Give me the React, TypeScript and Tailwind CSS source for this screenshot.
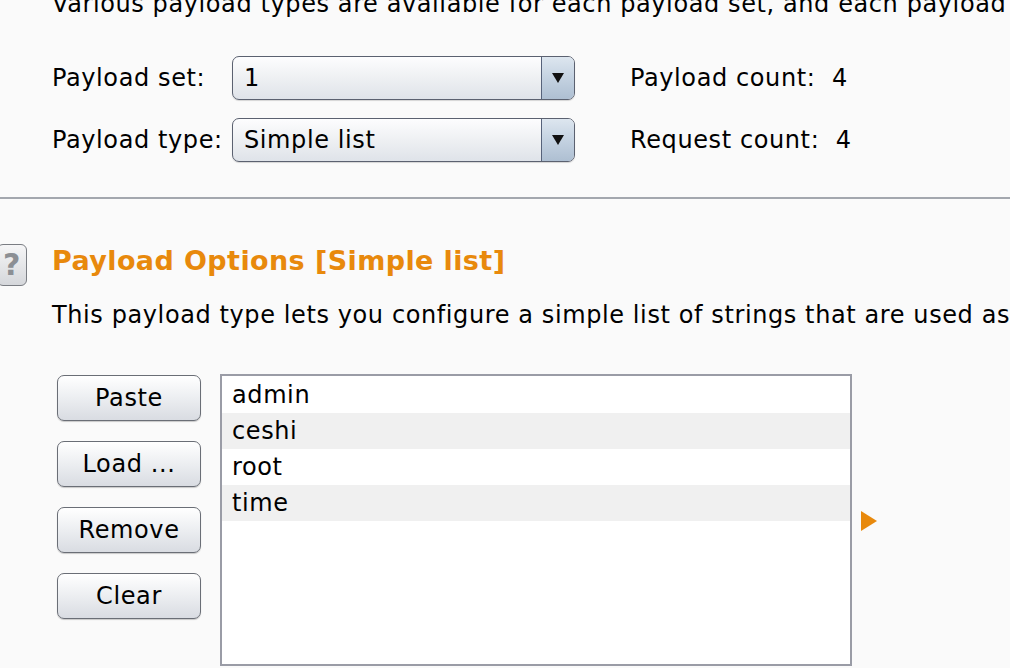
const Dropdown = ({ value }: { value: string }) => (
  <div className="flex h-[44px] w-[343px] overflow-hidden rounded-[7px] border border-[#5b6170] bg-gradient-to-b from-[#fdfdfe] via-[#eef0f3] to-[#dfe3e9] shadow-[0_1px_1px_rgba(0,0,0,0.15)]">
    <div className="flex flex-1 items-center pl-[11px] leading-none">{value}</div>
    <div className="flex w-[33px] items-center justify-center border-l border-[#56627a] bg-gradient-to-b from-[#dde6ef] via-[#c4d2e1] to-[#aebfd2]">
      <svg width="12" height="12" viewBox="0 0 12 12">
        <polygon points="0,1 12,1 6,11" fill="#111" />
      </svg>
    </div>
  </div>
);

const Button = ({ label }: { label: string }) => (
  <button className="flex h-[46px] w-[144px] items-center justify-center rounded-[7px] border border-[#6a6e76] bg-gradient-to-b from-[#ffffff] via-[#eceef1] to-[#d9dce2] leading-none text-black shadow-[0_1px_1px_rgba(0,0,0,0.2)]">
    {label}
  </button>
);

export default function App() {
  const items = ["admin", "ceshi", "root", "time"];

  return (
    <div
      className="h-[668px] w-[1010px] overflow-hidden bg-[#fafafa] text-[24px] tracking-[0.6px] text-black"
      style={{ fontFamily: '"DejaVu Sans", "Noto Sans", sans-serif' }}
    >
      <p className="-mt-[10px] whitespace-nowrap pl-[52px] leading-[28px]">
        Various payload types are available for each payload set, and each payload type can be customized in different ways.
      </p>

      <div className="mt-[38px] flex flex-col gap-[18px] pl-[52px]">
        <div className="flex items-center">
          <span className="w-[180px]">Payload set:</span>
          <Dropdown value="1" />
          <span className="ml-[55px] whitespace-pre">Payload count:  4</span>
        </div>
        <div className="flex items-center">
          <span className="w-[180px]">Payload type:</span>
          <Dropdown value="Simple list" />
          <span className="ml-[55px] whitespace-pre">Request count:  4</span>
        </div>
      </div>

      <div className="mt-[35px] h-[2px] bg-[#a3a7ae]" />

      <div className="mt-[45px] flex items-center">
        <div className="-ml-[3px] flex h-[42px] w-[30px] items-center justify-center rounded-[6px] border border-[#7a7d83] bg-gradient-to-b from-[#f6f6f7] to-[#d5d7db] text-[30px] font-bold leading-none text-[#8c8f94]">
          ?
        </div>
        <h2 className="mb-[10px] ml-[25px] text-[27px] font-bold leading-none tracking-[0.4px] text-[#e8890c]">
          Payload Options [Simple list]
        </h2>
      </div>

      <p className="mt-[15px] whitespace-nowrap pl-[52px] leading-[28px]">
        This payload type lets you configure a simple list of strings that are used as payloads.
      </p>

      <div className="mt-[45px] flex items-start pl-[57px]">
        <div className="mt-[1px] flex flex-col gap-[20px]">
          <Button label="Paste" />
          <Button label="Load ..." />
          <Button label="Remove" />
          <Button label="Clear" />
        </div>
        <div className="ml-[19px] h-[292px] w-[632px] border-2 border-[#9a9ca6] bg-white pt-[1px]">
          {items.map((item, i) => (
            <div
              key={item}
              className={`flex h-[36px] items-center pl-[10px] leading-none ${i % 2 === 1 ? "bg-[#f0f0f0]" : "bg-white"}`}
            >
              {item}
            </div>
          ))}
        </div>
        <svg className="ml-[8px] mt-[136px]" width="18" height="22" viewBox="0 0 18 22">
          <polygon points="1,1 17,11 1,21" fill="#e8890c" />
        </svg>
      </div>
    </div>
  );
}
